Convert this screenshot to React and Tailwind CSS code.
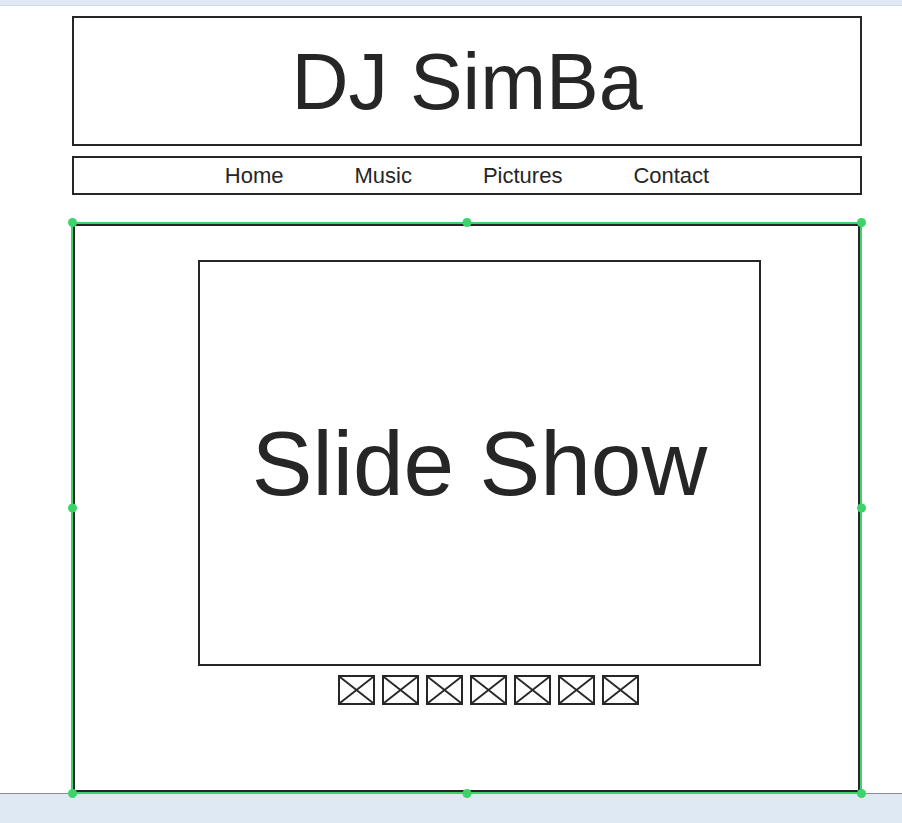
import React from 'react';

const navItems = ['Home', 'Music', 'Pictures', 'Contact'];
const thumbs = [0, 1, 2, 3, 4, 5, 6];

function Thumb() {
  return (
    <div className="w-[37px] h-[30px] border-2 border-[#262626]">
      <svg width="33" height="26" viewBox="0 0 33 26" className="block">
        <line x1="0" y1="0" x2="33" y2="26" stroke="#262626" strokeWidth="1.8" />
        <line x1="33" y1="0" x2="0" y2="26" stroke="#262626" strokeWidth="1.8" />
      </svg>
    </div>
  );
}

function Handle({ className }) {
  return <div className={'absolute w-[9px] h-[9px] rounded-full bg-[#3bd36a] ' + className} />;
}

export default function App() {
  return (
    <div className="w-[902px] h-[823px] flex flex-col bg-white overflow-hidden font-['Liberation_Sans',Arial,sans-serif] text-[#262626]">
      {/* top strip */}
      <div className="h-[6px] shrink-0 bg-[#dfe8f3] border-b border-[#cfdbe9]" />

      {/* canvas */}
      <div className="h-[788px] shrink-0 border-b border-[#8e8e8e] pt-[10px] pl-[72px]">
        <header className="w-[790px] h-[130px] border-2 border-[#262626] flex items-center justify-center">
          <h1 className="text-[79px] leading-none">DJ SimBa</h1>
        </header>

        <nav className="mt-[10px] w-[790px] h-[39px] border-2 border-[#262626] flex items-center justify-center gap-[71px] text-[22px] leading-none">
          {navItems.map(item => (
            <span key={item}>{item}</span>
          ))}
        </nav>

        {/* selected content block */}
        <div className="relative mt-[29px] ml-[1px] w-[787px] h-[568px]">
          <div className="w-full h-full border-2 border-[#262626] pt-[34px] pl-[123px]">
            <div className="w-[563px] h-[406px] border-2 border-[#262626] flex items-center justify-center">
              <span className="text-[91px] leading-none">Slide Show</span>
            </div>
            <div className="mt-[9px] ml-[140px] flex gap-[7px]">
              {thumbs.map(i => (
                <Thumb key={i} />
              ))}
            </div>
          </div>

          <div className="absolute -inset-[2px] border-2 border-[#3bd36a] pointer-events-none" />
          <Handle className="left-[-5px] top-[-6px]" />
          <Handle className="left-1/2 -translate-x-1/2 top-[-6px]" />
          <Handle className="right-[-6px] top-[-6px]" />
          <Handle className="left-[-5px] top-1/2 -translate-y-1/2" />
          <Handle className="right-[-6px] top-1/2 -translate-y-1/2" />
          <Handle className="left-[-5px] bottom-[-6px]" />
          <Handle className="left-1/2 -translate-x-1/2 bottom-[-6px]" />
          <Handle className="right-[-6px] bottom-[-6px]" />
        </div>
      </div>

      {/* bottom strip */}
      <div className="flex-1 bg-[#dfe9f4]" />
    </div>
  );
}
